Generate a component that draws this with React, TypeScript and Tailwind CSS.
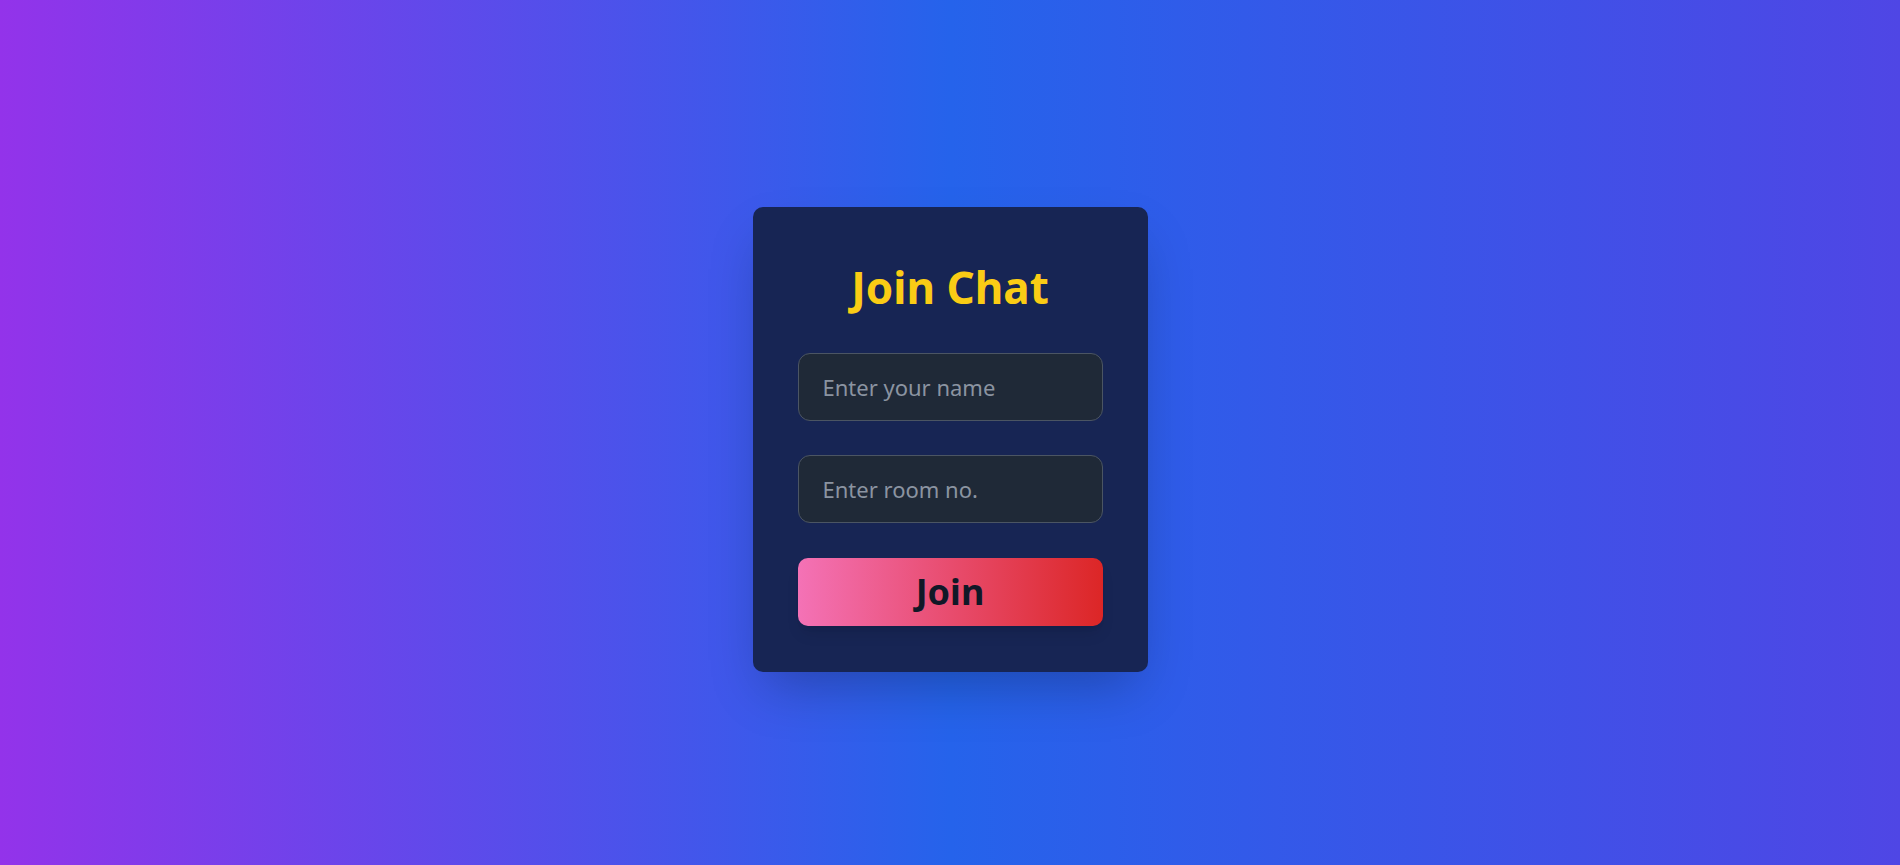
export default function App() {
  return (
    <div
      className="flex min-h-screen w-full items-center justify-center bg-linear-to-r/srgb from-[#9333ea] via-[#2563eb] to-[#4f46e5] pt-[14px]"
      style={{ fontFamily: '"Noto Sans", "Open Sans", sans-serif' }}
    >
      <div className="w-[395px] rounded-[10px] bg-[#172554] px-[45px] pt-[54px] pb-[46px] shadow-2xl">
        <h1 className="mb-[40px] text-center text-[44px] leading-[52px] font-bold text-[#facc15]">
          Join Chat
        </h1>
        <form className="flex flex-col gap-[34px]" onSubmit={(e) => e.preventDefault()}>
          <input
            type="text"
            placeholder="Enter your name"
            className="h-[68px] w-full rounded-xl border border-[#4b5563] bg-[#1f2937] px-6 text-[22px] text-gray-100 outline-none placeholder:text-[#8b94a1]"
          />
          <input
            type="text"
            placeholder="Enter room no."
            className="h-[68px] w-full rounded-xl border border-[#4b5563] bg-[#1f2937] px-6 text-[22px] text-gray-100 outline-none placeholder:text-[#8b94a1]"
          />
          <button
            type="submit"
            className="mt-px h-[68px] w-full rounded-[10px] bg-linear-to-r/srgb from-[#f472b6] to-[#dc2626] text-[36px] font-bold text-[#111827] shadow-lg"
          >
            Join
          </button>
        </form>
      </div>
    </div>
  );
}
